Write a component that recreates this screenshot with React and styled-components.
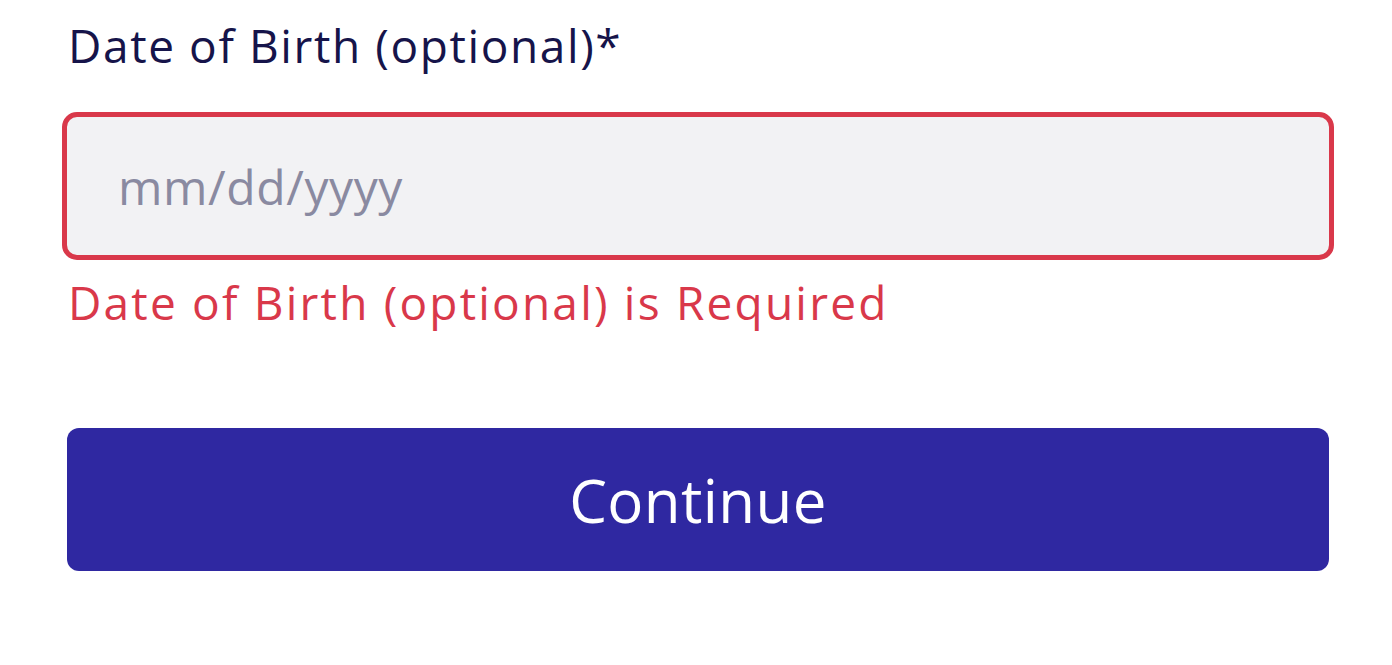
import React from 'react'
import styled, { createGlobalStyle } from 'styled-components'

const colors = {
    navy: '#16144a',
    red: '#d9384a',
    field: '#f2f2f4',
    placeholder: '#8a8aa1',
    primary: '#2f28a1',
    white: '#ffffff',
}

const GlobalStyle = createGlobalStyle`
    html, body {
        margin: 0;
        padding: 0;
        background: ${colors.white};
        font-family: "Open Sans", "Noto Sans", sans-serif;
    }
    * {
        box-sizing: border-box;
    }
`

const Form = styled.form`
    display: flex;
    flex-direction: column;
    padding: 14px 63px 0 67px;
`

const Label = styled.label`
    font-size: 46px;
    line-height: 62px;
    letter-spacing: 1.6px;
    color: ${colors.navy};
    padding-left: 1px;
`

const Input = styled.input`
    margin: 36px -5px 0;
    height: 148px;
    padding: 0 0 0 51px;
    border: 5px solid ${props => (props.$invalid ? colors.red : 'transparent')};
    border-radius: 15px;
    background: ${colors.field};
    font-family: inherit;
    font-size: 48px;
    letter-spacing: 0.6px;
    color: ${colors.navy};
    outline: none;

    &::placeholder {
        color: ${colors.placeholder};
    }
`

const Error = styled.div`
    margin-top: 11px;
    font-size: 46px;
    line-height: 62px;
    letter-spacing: 2.2px;
    color: ${colors.red};
    padding-left: 1px;
`

const Button = styled.button`
    margin-top: 95px;
    height: 143px;
    border: none;
    border-radius: 12px;
    background: ${colors.primary};
    color: ${colors.white};
    font-family: inherit;
    font-size: 60px;
    letter-spacing: 0.4px;
    cursor: pointer;
`

export default function App() {
    return (
        <>
            <GlobalStyle />
            <Form onSubmit={e => e.preventDefault()}>
                <Label htmlFor="dob">Date of Birth (optional)*</Label>
                <Input id="dob" placeholder="mm/dd/yyyy" $invalid />
                <Error>Date of Birth (optional) is Required</Error>
                <Button type="submit">Continue</Button>
            </Form>
        </>
    )
}
